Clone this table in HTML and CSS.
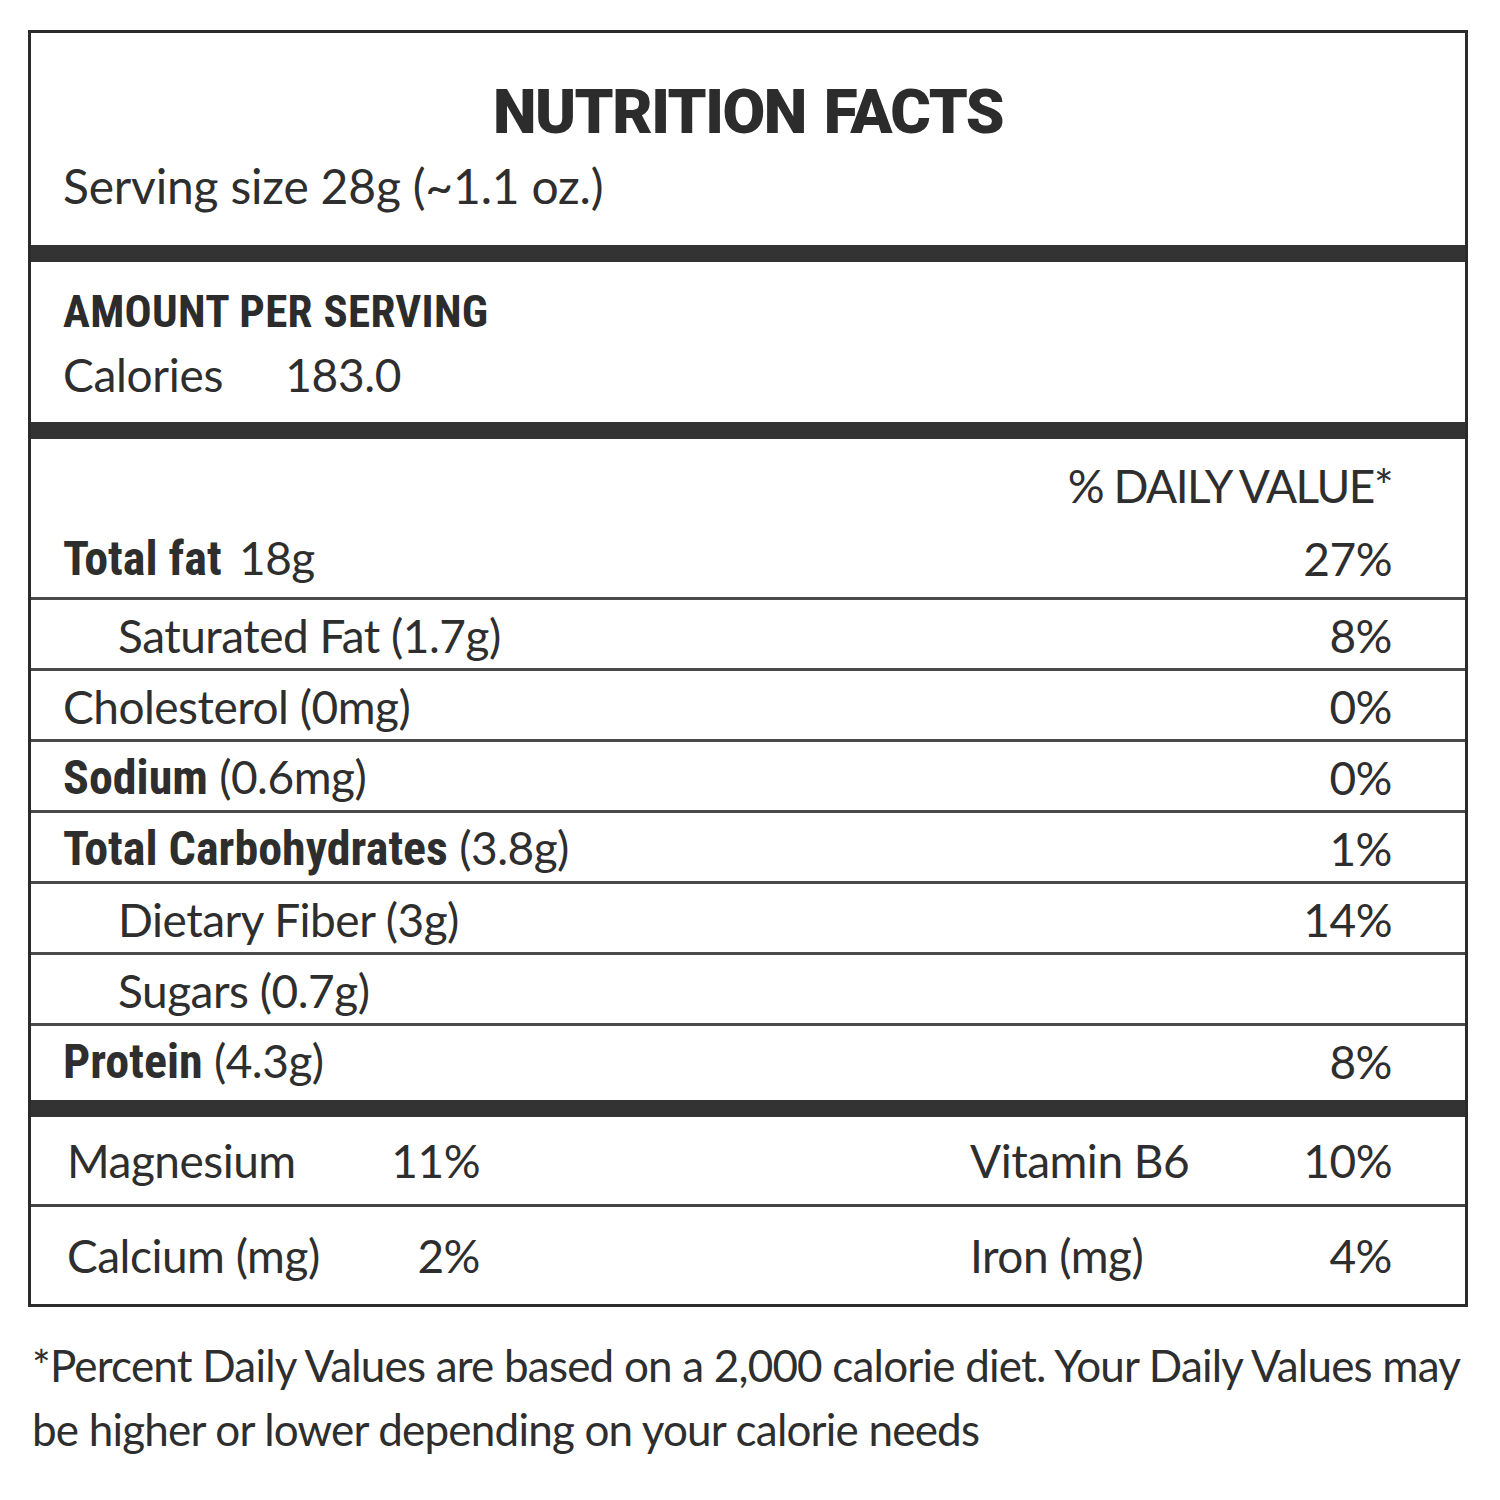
FILE: index.html
```html
<!DOCTYPE html>
<html lang="en">
<head>
<meta charset="utf-8">
<title>Nutrition Facts</title>
<link rel="stylesheet" href="styles.css">
</head>
<body>
<main class="page">
  <div class="label">
    <section class="head">
      <h1 class="title">NUTRITION FACTS</h1>
      <p class="serving">Serving size 28g (~1.1 oz.)</p>
    </section>
    <section class="amount">
      <p class="amount-title">AMOUNT PER SERVING</p>
      <p class="calories"><span class="cal-label">Calories</span><span class="cal-value">183.0</span></p>
    </section>
    <section class="nutrients">
      <div class="dv-head">% DAILY VALUE*</div>
      <div class="row row-top"><span class="name"><b>Total fat</b> <span class="gap-s"></span>18g</span><span class="pct">27%</span></div>
      <div class="row"><span class="name indent">Saturated Fat (1.7g)</span><span class="pct">8%</span></div>
      <div class="row"><span class="name">Cholesterol (0mg)</span><span class="pct">0%</span></div>
      <div class="row"><span class="name"><b>Sodium</b> (0.6mg)</span><span class="pct">0%</span></div>
      <div class="row"><span class="name"><b>Total Carbohydrates</b> (3.8g)</span><span class="pct">1%</span></div>
      <div class="row"><span class="name indent">Dietary Fiber (3g)</span><span class="pct">14%</span></div>
      <div class="row"><span class="name indent">Sugars (0.7g)</span><span class="pct"></span></div>
      <div class="row row-last"><span class="name"><b>Protein</b> (4.3g)</span><span class="pct">8%</span></div>
    </section>
    <section class="minerals">
      <div class="mrow">
        <div class="mcell"><span>Magnesium</span><span>11%</span></div>
        <div class="mcell"><span>Vitamin B6</span><span>10%</span></div>
      </div>
      <div class="mrow mrow-last">
        <div class="mcell"><span>Calcium (mg)</span><span>2%</span></div>
        <div class="mcell"><span>Iron (mg)</span><span>4%</span></div>
      </div>
    </section>
  </div>
  <p class="note">*Percent Daily Values are based on a 2,000 calorie diet. Your Daily Values may be higher or lower depending on your calorie needs</p>
</main>
</body>
</html>
```

FILE: styles.css
```css
html, body {
  margin: 0;
  padding: 0;
  background: #ffffff;
}
body {
  font-family: Lato, "Open Sans", "Noto Sans", sans-serif;
  color: #2e2e2e;
}
.page {
  padding: 30px 32px 0 28px;
  width: 1440px;
}
.label {
  width: 1434px;
  border: 3px solid #2b2b2b;
}
p, h1 { margin: 0; }

.head {
  height: 212px;
  padding: 0 0 0 32px;
  box-sizing: border-box;
}
.title {
  font-family: Roboto, "Noto Sans", sans-serif;
  font-weight: 900;
  font-size: 62px;
  line-height: 62px;
  letter-spacing: -1.5px;
  word-spacing: 4px;
  text-align: center;
  padding-top: 48px;
  padding-right: 32px;
  color: #2c2c2c;
}
.serving {
  font-size: 48px;
  line-height: 50px;
  margin-top: 18px;
  letter-spacing: -0.2px;
}

.amount {
  border-top: 17px solid #333333;
  height: 160px;
  padding-left: 32px;
}
.amount-title {
  font-family: "Liberation Sans Narrow", "Roboto Condensed", "DejaVu Sans Condensed", Roboto, sans-serif;
  font-weight: 700;
  font-size: 45px;
  line-height: 44px;
  letter-spacing: 0.3px;
  padding-top: 28px;
  color: #2c2c2c;
}
.calories {
  font-size: 46px;
  line-height: 50px;
  margin-top: 16px;
  letter-spacing: -0.3px;
  display: flex;
  gap: 62px;
}

.nutrients {
  border-top: 17px solid #333333;
  padding: 0 73px 0 32px;
}
.dv-head {
  text-align: right;
  font-size: 46px;
  line-height: 50px;
  padding-top: 22px;
  letter-spacing: -1.5px;
}
.row {
  display: flex;
  justify-content: space-between;
  align-items: flex-end;
  height: 61px;
  border-top: 3px solid #4a4a4a;
  margin: 0 -73px 0 -32px;
  padding: 0 73px 7px 32px;
  font-size: 46px;
  line-height: 50px;
  letter-spacing: -0.5px;
}
.row .name, .row .pct { display: block; }
.row-top {
  border-top: none;
  height: 73px;
  padding-bottom: 13px;
}
.row-last {
  height: 61px;
  padding-bottom: 13px;
}
.row b {
  font-family: "Liberation Sans Narrow", "Roboto Condensed", "DejaVu Sans Condensed", Roboto, sans-serif;
  font-weight: 700;
  font-size: 48px;
  letter-spacing: 0;
}
.indent { padding-left: 55px; }
.gap-s { display: inline-block; width: 6px; }

.minerals {
  border-top: 17px solid #333333;
}
.mrow {
  display: grid;
  grid-template-columns: 413px 422px;
  column-gap: 490px;
  padding: 0 0 0 36px;
  height: 87px;
  align-items: center;
  font-size: 46px;
  line-height: 50px;
  letter-spacing: -0.5px;
}
.mrow + .mrow {
  border-top: 3px solid #444444;
}
.mrow-last { height: 97px; }
.mcell {
  display: flex;
  justify-content: space-between;
}

.note {
  margin-top: 26px;
  padding-left: 4px;
  font-size: 44px;
  line-height: 64px;
  letter-spacing: -0.8px;
  color: #2e2e2e;
}
```
